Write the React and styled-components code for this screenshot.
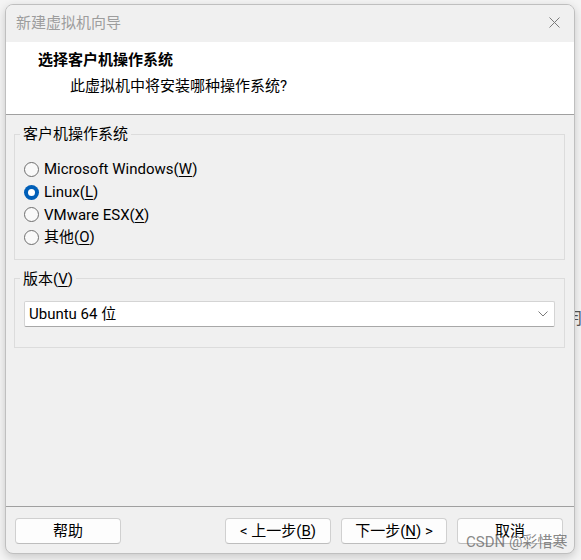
import React from 'react';
import styled, { createGlobalStyle } from 'styled-components';

const GlobalStyle = createGlobalStyle`
  html, body {
    margin: 0;
    padding: 0;
    background: #f4f4f4;
  }
  * {
    box-sizing: border-box;
  }
`;

const FONT = `"Segoe UI", Roboto, "Noto Sans CJK SC", sans-serif`;

const Page = styled.div`
  position: relative;
  width: 581px;
  height: 560px;
  padding: 4px 0 0 5px;
  overflow: hidden;
  font-family: ${FONT};
  font-size: 15px;
  color: #000;
`;

// part of a character behind the dialog, on the right edge
const StrayGlyph = styled.span`
  position: absolute;
  left: 566px;
  top: 309px;
  font-size: 16px;
  line-height: 20px;
  color: #555;
`;

const Window = styled.div`
  position: relative;
  width: 570px;
  height: 550px;
  display: flex;
  flex-direction: column;
  background: #f0f0f0;
  border: 1px solid #bfbfbf;
  border-radius: 8px;
  box-shadow: 0 3px 10px rgba(0, 0, 0, 0.18);
  overflow: hidden;
`;

const TitleBar = styled.div`
  height: 37px;
  flex: none;
  display: flex;
  align-items: center;
  justify-content: space-between;
  padding: 0 14px 2px 10px;
  background: #f0f0f0;
`;

const TitleText = styled.span`
  font-size: 15px;
  line-height: 20px;
  color: #9d9d9d;
`;

const CloseButton = styled.button`
  width: 11px;
  height: 11px;
  padding: 0;
  border: none;
  background: none;
  display: flex;
`;

const Header = styled.div`
  height: 73px;
  flex: none;
  padding: 8px 0 0 32px;
  background: #fff;
  border-bottom: 1px solid #a0a0a0;
`;

const HeaderTitle = styled.div`
  font-weight: bold;
  line-height: 20px;
`;

const HeaderSub = styled.div`
  margin: 6px 0 0 32px;
  line-height: 20px;
`;

const Body = styled.div`
  flex: 1;
  padding: 9px 9px 0 8px;
`;

const Group = styled.fieldset`
  margin: ${(p) => (p.$first ? '0' : '9px')} 0 0 0;
  padding: ${(p) => p.$pad};
  border: 1px solid #dcdcdc;
  min-width: 0;
`;

const Legend = styled.legend`
  margin-left: -4px;
  padding: 0 3px;
  line-height: 20px;
`;

const RadioList = styled.div`
  display: flex;
  flex-direction: column;
`;

const RadioRow = styled.label`
  height: 22.7px;
  display: flex;
  align-items: center;
  gap: 5px;
  line-height: 20px;
`;

const RadioDot = styled.span`
  width: 15px;
  height: 15px;
  flex: none;
  border-radius: 50%;
  box-sizing: border-box;
  border: ${(p) => (p.$checked ? 'none' : '1px solid #6e6e6e')};
  background: ${(p) => (p.$checked ? '#005fb8' : '#f9f9f9')};
  display: flex;
  align-items: center;
  justify-content: center;

  &::after {
    content: '';
    display: ${(p) => (p.$checked ? 'block' : 'none')};
    width: 7px;
    height: 7px;
    border-radius: 50%;
    background: #fff;
  }
`;

const U = styled.span`
  text-decoration: underline;
  text-underline-offset: 2px;
`;

const Select = styled.div`
  height: 26px;
  display: flex;
  align-items: center;
  justify-content: space-between;
  padding: 0 6px 0 4px;
  background: #fff;
  border: 1px solid #d4d4d4;
  border-bottom-color: #a8a8a8;
  border-radius: 2px;
  line-height: 20px;
`;

const Footer = styled.div`
  flex: none;
  height: 47px;
  display: flex;
  align-items: flex-start;
  padding: 11px 11px 0 9px;
  border-top: 1px solid #a0a0a0;
`;

const Spacer = styled.div`
  flex: 1;
`;

const Button = styled.button`
  width: 106px;
  height: 26px;
  margin-left: ${(p) => p.$gap || 0}px;
  padding: 0;
  font-family: ${FONT};
  font-size: 15px;
  line-height: 20px;
  color: #000;
  background: #fdfdfd;
  border: 1px solid #d0d0d0;
  border-bottom-color: #bdbdbd;
  border-radius: 4px;
`;

// CSDN watermark pasted over the screenshot
const Watermark = styled.span`
  position: absolute;
  left: 466px;
  top: 532px;
  font-size: 15px;
  line-height: 20px;
  color: rgba(105, 105, 105, 0.8);
  pointer-events: none;
`;

const CloseIcon = () => (
  <svg width="11" height="11" viewBox="0 0 11 11">
    <path d="M0.5 0.5 L10.5 10.5 M10.5 0.5 L0.5 10.5" stroke="#7a7a7a" strokeWidth="1" fill="none" />
  </svg>
);

const Chevron = () => (
  <svg width="10" height="6" viewBox="0 0 10 6">
    <path d="M0.5 0.5 L5 5 L9.5 0.5" stroke="#7a7a7a" strokeWidth="1" fill="none" />
  </svg>
);

const osOptions = [
  { label: 'Microsoft Windows', key: 'W' },
  { label: 'Linux', key: 'L', checked: true },
  { label: 'VMware ESX', key: 'X' },
  { label: '其他', key: 'O' },
];

export default function App() {
  return (
    <>
      <GlobalStyle />
      <Page>
        <StrayGlyph>冃</StrayGlyph>
        <Window>
          <TitleBar>
            <TitleText>新建虚拟机向导</TitleText>
            <CloseButton>
              <CloseIcon />
            </CloseButton>
          </TitleBar>

          <Header>
            <HeaderTitle>选择客户机操作系统</HeaderTitle>
            <HeaderSub>此虚拟机中将安装哪种操作系统?</HeaderSub>
          </Header>

          <Body>
            <Group $first $pad="14px 9px 10px 9px">
              <Legend>客户机操作系统</Legend>
              <RadioList>
                {osOptions.map((o) => (
                  <RadioRow key={o.key}>
                    <RadioDot $checked={o.checked} />
                    <span>
                      {o.label}(<U>{o.key}</U>)
                    </span>
                  </RadioRow>
                ))}
              </RadioList>
            </Group>

            <Group $pad="12px 9px 20px 9px">
              <Legend>
                版本(<U>V</U>)
              </Legend>
              <Select>
                <span>Ubuntu 64 位</span>
                <Chevron />
              </Select>
            </Group>
          </Body>

          <Footer>
            <Button>帮助</Button>
            <Spacer />
            <Button>
              &lt; 上一步(<U>B</U>)
            </Button>
            <Button $gap={10}>
              下一步(<U>N</U>) &gt;
            </Button>
            <Button $gap={10}>取消</Button>
          </Footer>
        </Window>
        <Watermark>CSDN @彩惜寒</Watermark>
      </Page>
    </>
  );
}
